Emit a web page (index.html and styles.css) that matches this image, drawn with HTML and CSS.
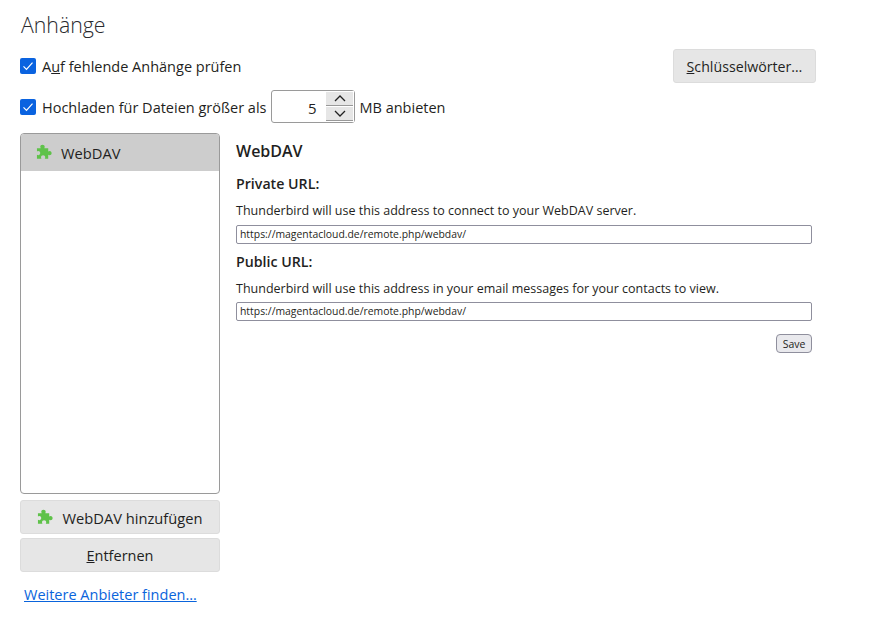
FILE: index.html
```html
<!DOCTYPE html>
<html lang="de">
<head>
<meta charset="utf-8">
<title>Anhänge</title>
<link rel="stylesheet" href="styles.css">
</head>
<body>
<svg class="defs" width="0" height="0" aria-hidden="true"><defs>
<symbol id="puzzle" viewBox="0 0 16 16"><path fill="#5fc24a" d="M6 .8c1.300 0 2.200.8 2.200 1.800 0 .5-.3.9-.3 1.300h3.600v3.200c.4 0 .7-.4 1.300-.4 1 0 1.900.8 1.900 1.900s-.9 1.900-1.900 1.900c-.6 0-.9-.4-1.300-.4v3.700H8.300c0-.4.400-.8.400-1.400 0-1-.9-1.800-2-1.800s-2 .8-2 1.800c0 .6.400 1 .4 1.400H.9v-3.700c.4 0 .8.400 1.300.400 1 0 1.800-.9 1.800-2s-.8-2-1.800-2c-.5 0-.9.400-1.300.400V3.900h3.500c0-.4-.4-.8-.4-1.300 0-1 .9-1.800 2-1.800z"/></symbol>
</defs></svg>
<main class="page">
  <h1 class="title">Anhänge</h1>
  <div class="row row-first">
    <label class="check"><span class="box"><svg viewBox="0 0 16 16" width="16" height="16"><path d="M3.500 8.300l3 3 6-6.600" fill="none" stroke="#fff" stroke-width="1.200"/></svg></span>A<u>u</u>f fehlende Anhänge prüfen</label>
    <button class="btn btn-keywords" type="button"><u>S</u>chlüsselwörter…</button>
  </div>
  <div class="row row-second">
    <label class="check"><span class="box"><svg viewBox="0 0 16 16" width="16" height="16"><path d="M3.500 8.300l3 3 6-6.600" fill="none" stroke="#fff" stroke-width="1.200"/></svg></span>Hochladen für Dateien größer als</label>
    <span class="spin">
      <span class="spin-value">5</span>
      <span class="spin-btns">
        <span class="spin-btn"><svg width="12" height="7" viewBox="0 0 12 7"><path d="M1 6l5-5 5 5" fill="none" stroke="#222" stroke-width="1.300"/></svg></span>
        <span class="spin-btn"><svg width="12" height="7" viewBox="0 0 12 7"><path d="M1 1l5 5 5-5" fill="none" stroke="#222" stroke-width="1.300"/></svg></span>
      </span>
    </span>
    <span class="unit">MB anbieten</span>
  </div>
  <div class="columns">
    <aside class="side">
      <div class="list">
        <div class="list-item"><svg class="puzzle" width="17" height="17"><use href="#puzzle"/></svg>WebDAV</div>
      </div>
      <button class="btn btn-add" type="button"><svg class="puzzle" width="17" height="17"><use href="#puzzle"/></svg>WebDAV hinzufügen</button>
      <button class="btn btn-remove" type="button"><u>E</u>ntfernen</button>
      <a class="link" href="#">Weitere Anbieter finden…</a>
    </aside>
    <section class="detail">
      <h2 class="detail-title">WebDAV</h2>
      <h3 class="field-title">Private URL:</h3>
      <p class="hint">Thunderbird will use this address to connect to your WebDAV server.</p>
      <div class="url">https://magentacloud.de/remote.php/webdav/</div>
      <h3 class="field-title field-second">Public URL:</h3>
      <p class="hint">Thunderbird will use this address in your email messages for your contacts to view.</p>
      <div class="url">https://magentacloud.de/remote.php/webdav/</div>
      <div class="actions"><button class="save" type="button">Save</button></div>
    </section>
  </div>
</main>
</body>
</html>
```
FILE: styles.css
```css
* { box-sizing: border-box; }
html, body { margin: 0; background: #fff; }
body { font-family: "Open Sans", "Noto Sans", sans-serif; color: #1f1f22; font-size: 14.500px; overflow: hidden; }
.defs { position: absolute; }
.page { width: 884px; height: 631px; padding: 10px 68px 0 20px; }
.title { margin: 0 0 0 1px; font-size: 21.300px; font-weight: 300; line-height: 30px; color: #2a2a2e; }
.row { display: flex; align-items: center; }
.row-first { margin-top: 9px; height: 34px; justify-content: space-between; }
.row-second { margin-top: 7px; height: 33px; }
.check { display: flex; align-items: center; padding-top: 1px; }
.box { width: 16px; height: 16px; margin: -1px 6px 0 0; background: #0a63e0; border-radius: 2px; display: block; }
.box svg { display: block; }
.btn { font: inherit; color: inherit; background: #e6e6e6; border: 1px solid #dcdcdc; border-radius: 3px; padding: 0; display: flex; align-items: center; justify-content: center; }
.btn-keywords { width: 143px; height: 34px; font-size: 14.200px; }
.spin { width: 84px; height: 33px; margin: 0 4px 0 5px; border: 1px solid #9a9a9a; border-radius: 3px; display: flex; background: #fff; }
.spin-value { flex: 1; text-align: right; padding: 2px 10px 0 0; line-height: 31px; font-size: 15px; }
.spin-btns { width: 28px; display: flex; flex-direction: column; padding: 1px 1px 1px 0; gap: 1px; background: #fff; }
.spin-btn { flex: 1; background: #e6e6e6; border-bottom: 1px solid #999; display: flex; align-items: center; justify-content: center; }
.unit { padding-top: 1px; }
.columns { display: flex; margin-top: 10px; gap: 16px; }
.side { width: 200px; flex: none; display: flex; flex-direction: column; }
.list { height: 361px; border: 1px solid #9a9a9a; border-radius: 4px; overflow: hidden; }
.list-item { height: 37px; background: #cdcdcd; display: flex; align-items: center; padding-left: 15px; font-size: 14.700px; }
.puzzle { flex: none; margin-right: 8px; }
.btn-add { height: 34px; margin-top: 6px; padding-top: 1px; font-size: 14.700px; }
.btn-remove { height: 34px; margin-top: 4px; }
.link { margin: 13px 0 0 4px; color: #0a64dc; text-decoration: underline; }
.detail { width: 576px; }
.detail-title { margin: 7px 0 0; font-size: 16px; font-weight: 600; line-height: 22px; }
.field-title { margin: 12px 0 0; font-size: 14.200px; font-weight: 600; line-height: 20px; }
.field-second { margin-top: 8px; }
.hint { margin: 8px 0 0; font-size: 12.500px; line-height: 18px; }
.url { margin-top: 5px; height: 19px; border: 1px solid #8f8f9d; border-radius: 2px; font-size: 10.400px; line-height: 17px; padding-left: 3px; }
.field-second + .hint + .url { margin-top: 4px; }
.actions { display: flex; justify-content: flex-end; margin-top: 13px; }
.save { font: inherit; font-size: 10.500px; width: 36px; height: 19px; padding: 0; color: inherit; background: #e9e9ed; border: 1px solid #8f8f9d; border-radius: 4px; }
```
